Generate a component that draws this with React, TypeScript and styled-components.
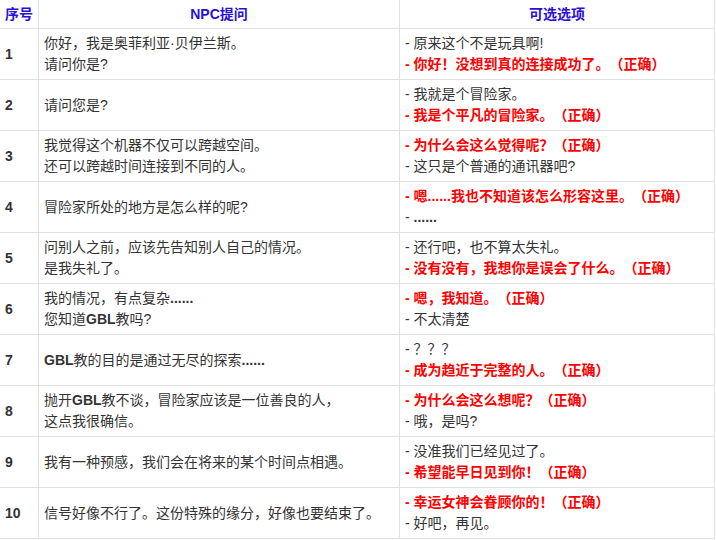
import React from "react";
import styled, { createGlobalStyle } from "styled-components";

const Global = createGlobalStyle`
  html, body { margin: 0; padding: 0; background: #ffffff; }
  body {
    font-family: "Liberation Sans", "Noto Sans CJK SC", sans-serif;
    font-size: 14px;
    color: #333333;
    text-spacing-trim: space-all;
  }
`;

const Table = styled.table`
  border-collapse: collapse;
  table-layout: fixed;
  width: 715px;
`;

const HeadCell = styled.th<{ $w: number }>`
  width: ${(p) => p.$w}px;
  height: 20px;
  padding: 4px 5px;
  line-height: 20px;
  font-weight: 700;
  color: #2a0fd6;
  text-align: center;
  border: 1px solid #dfe2e5;
  border-top: none;
  &:first-child { border-left: none; }
`;

const Row = styled.tr``;

const Cell = styled.td<{ $num?: boolean }>`
  height: 42px;
  padding: 4px 5px;
  line-height: 21px;
  vertical-align: middle;
  border: 1px solid #dfe2e5;
  font-weight: ${(p) => (p.$num ? 700 : 400)};
  &:first-child { border-left: none; }
`;

const Line = styled.div<{ $correct?: boolean }>`
  white-space: nowrap;
  text-spacing-trim: space-all;
  color: ${(p) => (p.$correct ? "#ff0000" : "#333333")};
  font-weight: ${(p) => (p.$correct ? 700 : 400)};
`;

const B = styled.b`
  font-weight: 700;
`;

type Opt = { text: React.ReactNode; ok?: boolean };
type Item = { q: React.ReactNode[]; opts: Opt[] };

const data: Item[] = [
  {
    q: ["你好，我是奥菲利亚·贝伊兰斯。", "请问你是?"],
    opts: [{ text: "原来这个不是玩具啊!" }, { text: "你好！没想到真的连接成功了。（正确）", ok: true }],
  },
  {
    q: ["请问您是?"],
    opts: [{ text: "我就是个冒险家。" }, { text: "我是个平凡的冒险家。（正确）", ok: true }],
  },
  {
    q: ["我觉得这个机器不仅可以跨越空间。", "还可以跨越时间连接到不同的人。"],
    opts: [{ text: "为什么会这么觉得呢？（正确）", ok: true }, { text: "这只是个普通的通讯器吧?" }],
  },
  {
    q: ["冒险家所处的地方是怎么样的呢?"],
    opts: [
      { text: <>嗯<B>......</B>我也不知道该怎么形容这里。（正确）</>, ok: true },
      { text: <B>......</B> },
    ],
  },
  {
    q: ["问别人之前，应该先告知别人自己的情况。", "是我失礼了。"],
    opts: [{ text: "还行吧，也不算太失礼。" }, { text: "没有没有，我想你是误会了什么。（正确）", ok: true }],
  },
  {
    q: [<>我的情况，有点复杂<B>......</B></>, <>您知道<B>GBL</B>教吗?</>],
    opts: [{ text: "嗯，我知道。（正确）", ok: true }, { text: "不太清楚" }],
  },
  {
    q: [<><B>GBL</B>教的目的是通过无尽的探索<B>......</B></>],
    opts: [{ text: "？？？" }, { text: "成为趋近于完整的人。（正确）", ok: true }],
  },
  {
    q: [<>抛开<B>GBL</B>教不谈，冒险家应该是一位善良的人，</>, "这点我很确信。"],
    opts: [{ text: "为什么会这么想呢？（正确）", ok: true }, { text: "哦，是吗?" }],
  },
  {
    q: ["我有一种预感，我们会在将来的某个时间点相遇。"],
    opts: [{ text: "没准我们已经见过了。" }, { text: "希望能早日见到你！（正确）", ok: true }],
  },
  {
    q: ["信号好像不行了。这份特殊的缘分，好像也要结束了。"],
    opts: [{ text: "幸运女神会眷顾你的！（正确）", ok: true }, { text: "好吧，再见。" }],
  },
];

export default function App() {
  return (
    <>
      <Global />
      <Table>
        <thead>
          <tr>
            <HeadCell $w={28}>序号</HeadCell>
            <HeadCell $w={350}>NPC提问</HeadCell>
            <HeadCell $w={304}>可选选项</HeadCell>
          </tr>
        </thead>
        <tbody>
          {data.map((it, i) => (
            <Row key={i}>
              <Cell $num>{i + 1}</Cell>
              <Cell>
                {it.q.map((l, j) => (
                  <Line key={j}>{l}</Line>
                ))}
              </Cell>
              <Cell>
                {it.opts.map((o, j) => (
                  <Line key={j} $correct={o.ok}>
                    - {o.text}
                  </Line>
                ))}
              </Cell>
            </Row>
          ))}
        </tbody>
      </Table>
    </>
  );
}
